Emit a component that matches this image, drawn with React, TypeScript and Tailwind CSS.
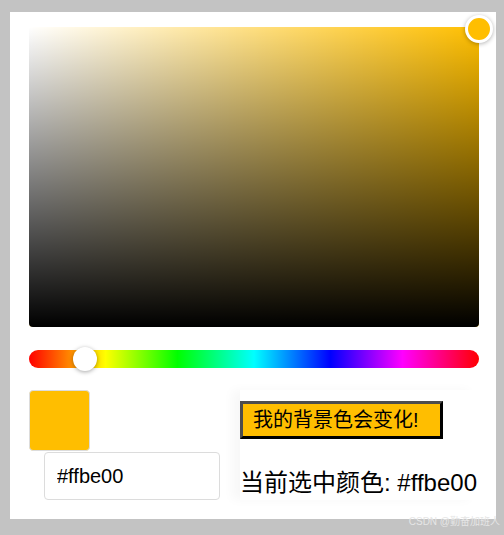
import React, { useState } from "react";

const hex = "#ffbe00";

export default function App() {
  const [color] = useState(hex);

  return (
    <div className="relative h-[535px] w-[504px] bg-[#c3c3c3] pt-[12px] pl-[10px] font-['Liberation_Sans','Noto_Sans_CJK_SC',sans-serif]">
      <div className="flex h-[507px] w-[486px] flex-col bg-white pt-[15px] pl-[19px]">
        {/* saturation / value panel */}
        <div className="relative h-[300px] w-[450px] rounded-b-[4px] bg-[#ffbf00]">
          <div className="absolute inset-0 rounded-b-[4px] bg-gradient-to-r from-white to-transparent" />
          <div className="absolute inset-0 rounded-b-[4px] bg-gradient-to-b from-transparent to-black" />
          <div className="absolute -top-[12px] -right-[14px] h-[28px] w-[28px] rounded-full border-[3px] border-white bg-[#ffbe00] shadow-[0_1px_4px_rgba(0,0,0,0.3)]" />
        </div>

        {/* hue slider */}
        <div className="relative mt-[23px] h-[18px] w-[450px] rounded-full bg-[linear-gradient(to_right,#f00_0%,#ff0_17%,#0f0_33%,#0ff_50%,#00f_67%,#f0f_83%,#f00_100%)]">
          <div className="absolute -top-[3px] left-[44px] h-[24px] w-[24px] rounded-full bg-white shadow-[0_1px_4px_rgba(0,0,0,0.35)]" />
        </div>

        {/* bottom row */}
        <div className="mt-[22px] flex">
          <div className="w-[211px]">
            <div
              className="h-[61px] w-[61px] rounded-[4px] border border-[#dcdcdc]"
              style={{ backgroundColor: color }}
            />
            <input
              readOnly
              value={color}
              className="mt-px ml-[15px] h-[48px] w-[176px] rounded-[4px] border border-[#dcdcdc] px-[12px] text-[20px] text-black outline-none"
            />
          </div>
          <div className="flex flex-col shadow-[-8px_0_10px_rgba(0,0,0,0.03)]">
            <button
              className="mt-[11px] h-[38px] w-[203px] border-[3px] border-t-[#4d4d4d] border-l-[#4d4d4d] border-r-black border-b-black pl-[10px] text-left text-[20px] leading-none text-black"
              style={{ backgroundColor: color }}
            >
              我的背景色会变化!
            </button>
            <p className="mt-[28px] text-[24px] leading-[32px] text-black">
              当前选中颜色: {color}
            </p>
          </div>
        </div>
      </div>
      <span className="absolute right-[4px] bottom-[6px] text-[10px] text-[#e6e6e6]">
        CSDN @勤奋加班人
      </span>
    </div>
  );
}
